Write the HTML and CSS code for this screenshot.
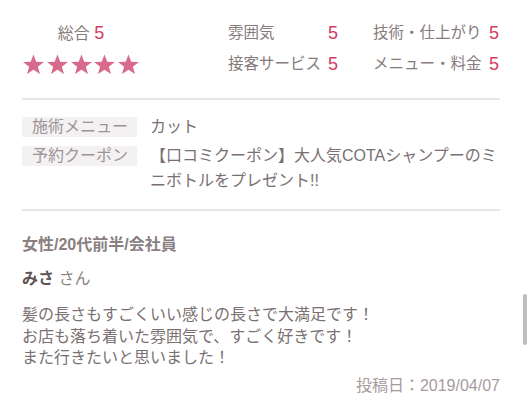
FILE: index.html
```html
<!DOCTYPE html>
<html lang="ja">
<head>
  <meta charset="UTF-8" />
  <meta name="viewport" content="width=device-width, initial-scale=1.0"/>
  <title>口コミ</title>
  <link rel="stylesheet" href="styles.css">
</head>
<body>
  <div class="review">
    <div class="summary">
      <div class="total">
        <p class="total-head">総合 <span class="num">5</span></p>
        <div class="stars">
          <svg class="star" viewBox="0 0 24 23"><polygon points="12,0.5 15,8.4 23.4,8.7 16.8,13.9 19.1,22 12,17.3 4.9,22 7.2,13.9 0.6,8.7 9,8.4"/></svg>
          <svg class="star" viewBox="0 0 24 23"><polygon points="12,0.5 15,8.4 23.4,8.7 16.8,13.9 19.1,22 12,17.3 4.9,22 7.2,13.9 0.6,8.7 9,8.4"/></svg>
          <svg class="star" viewBox="0 0 24 23"><polygon points="12,0.5 15,8.4 23.4,8.7 16.8,13.9 19.1,22 12,17.3 4.9,22 7.2,13.9 0.6,8.7 9,8.4"/></svg>
          <svg class="star" viewBox="0 0 24 23"><polygon points="12,0.5 15,8.4 23.4,8.7 16.8,13.9 19.1,22 12,17.3 4.9,22 7.2,13.9 0.6,8.7 9,8.4"/></svg>
          <svg class="star" viewBox="0 0 24 23"><polygon points="12,0.5 15,8.4 23.4,8.7 16.8,13.9 19.1,22 12,17.3 4.9,22 7.2,13.9 0.6,8.7 9,8.4"/></svg>
        </div>
      </div>
      <div class="scores">
        <span>雰囲気</span><span class="num">5</span>
        <span>技術・仕上がり</span><span class="num">5</span>
        <span>接客サービス</span><span class="num">5</span>
        <span>メニュー・料金</span><span class="num">5</span>
      </div>
    </div>

    <div class="details">
      <div class="row">
        <span class="label">施術メニュー</span>
        <span class="value">カット</span>
      </div>
      <div class="row">
        <span class="label">予約クーポン</span>
        <span class="value">【口コミクーポン】大人気COTAシャンプーのミニボトルをプレゼント!!</span>
      </div>
    </div>

    <div class="body">
      <p class="profile">女性/20代前半/会社員</p>
      <p class="name"><strong>みさ</strong> さん</p>
      <p class="comment">髪の長さもすごくいい感じの長さで大満足です！<br>お店も落ち着いた雰囲気で、すごく好きです！<br>また行きたいと思いました！</p>
      <p class="date">投稿日：2019/04/07</p>
    </div>
  </div>
  <div class="scrollbar"></div>
</body>
</html>
```

FILE: styles.css
```css
body { margin: 0; padding: 0 31px 0 22px; background: #fff; color: #857b7c; font-family: "Liberation Sans", "Noto Sans CJK JP", sans-serif; font-size: 16px; }
p { margin: 0; }
.num { color: #d33c63; font-size: 18px; }

.summary { display: flex; padding: 18px 0 19px; border-bottom: 2px solid #e8e6e6; }
.total { width: 118px; text-align: center; }
.total-head { line-height: 30px; }
.stars { display: flex; gap: 0.8px; height: 30px; align-items: center; }
.star { width: 23px; height: 21px; fill: #d86a8c; }
.scores { margin-left: 88px; display: grid; grid-template-columns: 100px 45px 116px auto; line-height: 30px; }
.scores span:not(.num) { font-size: 15.5px; }

.details { padding: 14px 0 16px; border-bottom: 2px solid #e8e6e6; }
.row { display: flex; align-items: flex-start; margin-bottom: 4px; }
.row:last-child { margin-bottom: 0; }
.label { flex: none; width: 105px; padding-left: 10px; margin-top: 2.5px; line-height: 20px; background: #f3f1f1; color: #9d9394; }
.value { flex: 1; margin-left: 13px; line-height: 25px; color: #7a7071; }

.body { padding-top: 23px; }
.profile { font-weight: bold; line-height: 22px; color: #8a8081; }
.name { margin-top: 12px; line-height: 22px; color: #8a8081; }
.name strong { color: #5f5556; }
.comment { margin-top: 14px; line-height: 21.5px; color: #7a7071; }
.date { margin-top: 6px; text-align: right; line-height: 22px; color: #a59c9d; }

.scrollbar { position: fixed; left: 523px; top: 294px; width: 4px; height: 51px; border-radius: 2px; background: #bdbdbd; }
```
